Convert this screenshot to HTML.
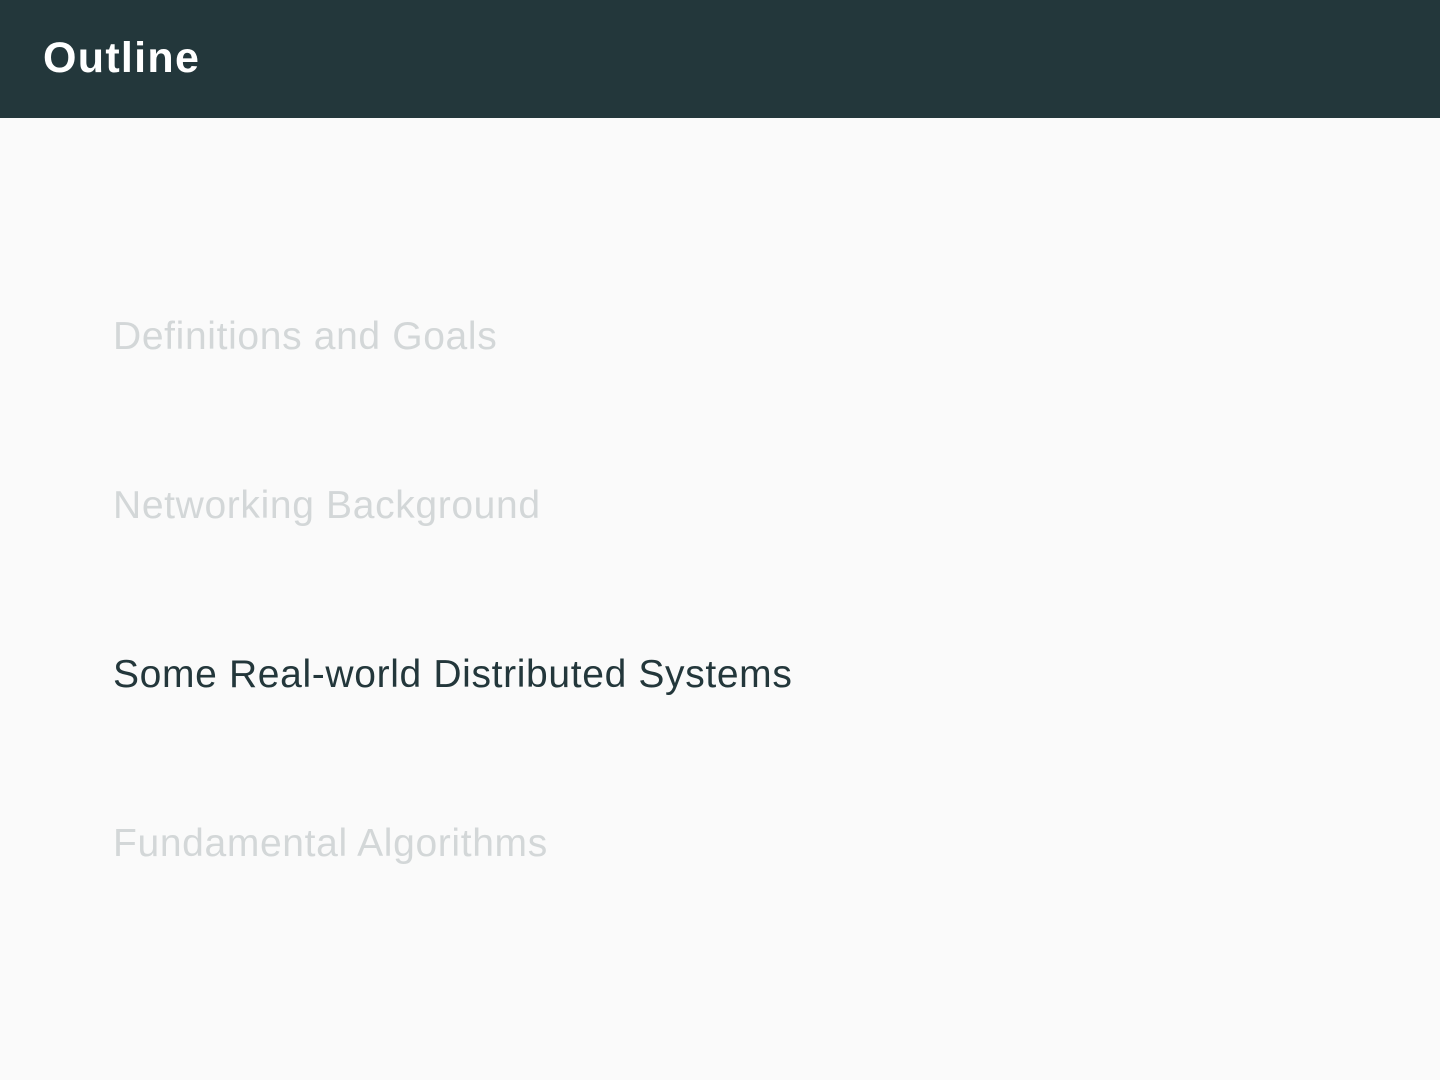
<!DOCTYPE html>
<html><head><meta charset="utf-8"><style>
html,body{margin:0;padding:0;}
body{width:1440px;height:1080px;background:#fafafa;position:relative;overflow:hidden;font-family:"Liberation Sans",sans-serif;}
.hdr{position:absolute;left:0;top:0;width:1440px;height:118px;background:#23373b;}
.hdr span{position:absolute;left:43px;top:37px;font-size:43px;font-weight:bold;color:#fff;line-height:1;letter-spacing:1.3px;}
.it{position:absolute;left:113px;font-size:39px;line-height:1;color:#d3d7d8;white-space:nowrap;letter-spacing:0.65px;}
.cur{color:#23373b;}
</style></head><body>
<div class="hdr"><span>Outline</span></div>
<div class="it" style="top:317px">Definitions and Goals</div>
<div class="it" style="top:486px">Networking Background</div>
<div class="it cur" style="top:655px">Some Real-world Distributed Systems</div>
<div class="it" style="top:824px">Fundamental Algorithms</div>
</body></html>
